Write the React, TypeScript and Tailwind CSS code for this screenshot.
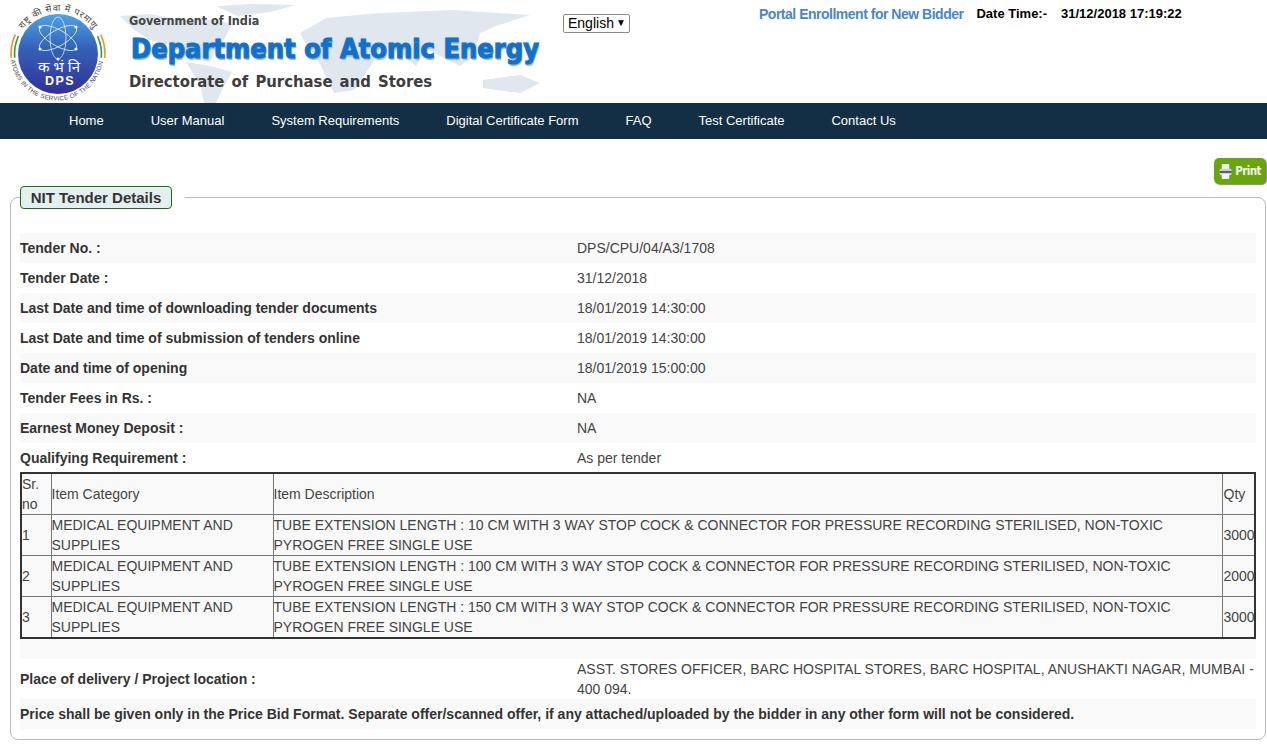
const navItems = [
  "Home",
  "User Manual",
  "System Requirements",
  "Digital Certificate Form",
  "FAQ",
  "Test Certificate",
  "Contact Us",
];

const details = [
  { label: "Tender No. :", value: "DPS/CPU/04/A3/1708" },
  { label: "Tender Date :", value: "31/12/2018" },
  { label: "Last Date and time of downloading tender documents", value: "18/01/2019 14:30:00" },
  { label: "Last Date and time of submission of tenders online", value: "18/01/2019 14:30:00" },
  { label: "Date and time of opening", value: "18/01/2019 15:00:00" },
  { label: "Tender Fees in Rs. :", value: "NA" },
  { label: "Earnest Money Deposit :", value: "NA" },
  { label: "Qualifying Requirement :", value: "As per tender" },
];

const items = [
  { sr: 1, length: "10 CM", qty: 3000 },
  { sr: 2, length: "100 CM", qty: 2000 },
  { sr: 3, length: "150 CM", qty: 3000 },
];

function Logo() {
  return (
    <svg width="110" height="103" viewBox="0 0 110 103" className="-ml-[2px] shrink-0">
      <defs>
        <linearGradient id="globe" x1="0" y1="0" x2="0" y2="1">
          <stop offset="0" stopColor="#4fa3e6" />
          <stop offset="0.42" stopColor="#3463b8" />
          <stop offset="1" stopColor="#322f98" />
        </linearGradient>
        <path id="topArc" d="M22.8 29.3 A43 43 0 0 1 93.2 29.3" />
        <path id="bottomArc" d="M10.9 60 A46.5 46.5 0 0 0 103.1 60" />
      </defs>
      <path d="M15.3 34.6 A46 46 0 0 0 11.2 58" fill="none" stroke="#f0932b" strokeWidth="1.6" />
      <path d="M18.5 36 A42.5 42.5 0 0 0 14.7 57.7" fill="none" stroke="#2f9a3c" strokeWidth="1.6" />
      <path d="M97.5 36 A42.5 42.5 0 0 1 101.3 57.7" fill="none" stroke="#2f9a3c" strokeWidth="1.6" />
      <path d="M100.7 34.6 A46 46 0 0 1 104.8 58" fill="none" stroke="#f0932b" strokeWidth="1.6" />
      <circle cx="58" cy="54" r="40" fill="url(#globe)" />
      <g fill="none" stroke="#fff" strokeWidth="0.8" opacity="0.85">
        <ellipse cx="58" cy="38" rx="8" ry="21" />
        <ellipse cx="58" cy="38" rx="8" ry="21" transform="rotate(60 58 38)" />
        <ellipse cx="58" cy="38" rx="8" ry="21" transform="rotate(-60 58 38)" />
      </g>
      <g fill="#fff">
        <circle cx="58" cy="59" r="1.5" />
        <circle cx="40" cy="49" r="1.5" />
        <circle cx="76" cy="49" r="1.5" />
        <circle cx="40" cy="27" r="1.5" />
        <circle cx="76" cy="27" r="1.5" />
      </g>
      <text x="59" y="72" textAnchor="middle" fontSize="15" fill="#fff" fontFamily="'Noto Sans', sans-serif">
        क भं नि
      </text>
      <text x="60" y="85" textAnchor="middle" fontSize="12.5" fontWeight="700" letterSpacing="1.5" fill="#fff" fontFamily="'Liberation Sans', sans-serif">
        DPS
      </text>
      <text fontSize="9" fill="#444" fontFamily="'Noto Sans', sans-serif">
        <textPath href="#topArc" textLength="82" lengthAdjust="spacing">
          राष्ट्र की सेवा में परमाणु
        </textPath>
      </text>
      <text fontSize="6.2" fill="#444" fontFamily="'Liberation Sans', sans-serif">
        <textPath href="#bottomArc" textLength="132" lengthAdjust="spacing">
          ATOMS IN THE SERVICE OF THE NATION
        </textPath>
      </text>
    </svg>
  );
}

function WorldMap() {
  return (
    <svg
      width="430"
      height="103"
      viewBox="0 0 430 103"
      className="absolute left-[120px] top-0"
      fill="#e0e7ef"
    >
      <path d="M0 16 L30 14 L60 20 L95 20 L112 24 L104 40 L96 48 L90 62 L72 58 L56 46 L30 40 L14 30 Z" />
      <path d="M66 62 L90 66 L112 72 L104 86 L96 103 L84 103 L80 84 Z" />
      <path d="M96 6 L130 4 L176 5 L150 12 L118 16 Z" />
      <path d="M180 33 L206 18 L260 13 L333 10 L410 15 L376 26 L360 33 L354 56 L340 66 L320 56 L306 48 L296 66 L280 52 L262 46 L252 64 L234 90 L214 93 L200 64 L186 44 Z" />
      <path d="M363 80 L400 75 L420 83 L400 93 L363 88 Z" />
    </svg>
  );
}

function DetailRow({ label, value, striped }: { label: string; value: string; striped: boolean }) {
  return (
    <div className={`flex h-[30px] items-center text-sm ${striped ? "bg-[#f9f9f9]" : ""}`}>
      <div className="w-[557px] font-bold text-[#333]">{label}</div>
      <div className="text-[#444]">{value}</div>
    </div>
  );
}

function PrinterIcon() {
  return (
    <svg width="13" height="17" viewBox="0 0 14 17">
      <rect x="3" y="0.5" width="8" height="6" fill="#f1f3f4" />
      <rect x="0.5" y="5.5" width="13" height="7" rx="1.5" fill="#c9ced2" />
      <rect x="0.5" y="8" width="13" height="2" fill="#4f5a60" />
      <rect x="3" y="11" width="8" height="5.5" fill="#f1f3f4" />
    </svg>
  );
}

export default function App() {
  return (
    <div className="min-h-[754px] bg-white font-['Liberation_Sans',Arial,sans-serif]">
      <header className="relative flex h-[103px] overflow-hidden">
        <WorldMap />
        <div className="relative flex w-[563px] pl-[2px]">
          <Logo />
          <div className="pl-[19px] pt-[13px] font-['DejaVu_Sans_Condensed','DejaVu_Sans',sans-serif] font-bold">
            <div className="text-[12.5px] leading-[16px] text-[#444]">Government of India</div>
            <div className="ml-[2px] mt-[2px] whitespace-nowrap text-[27px] leading-[36px] text-[#0f72c8] [-webkit-text-stroke:1px_#1670c6] [text-shadow:0_0_2px_#8dbde8,1px_2px_1px_#9cb4c8]">
              Department of Atomic Energy
            </div>
            <div className="mt-[5px] whitespace-nowrap text-[16.5px] leading-[20px] text-[#3d3d3d] [word-spacing:2px]">
              Directorate of Purchase and Stores
            </div>
          </div>
        </div>
        <div className="relative h-fit pt-[14px]">
          <select className="block h-[19px] w-[67px] appearance-none rounded-[2px] border border-[#8a8a8a] bg-white pl-[4px] text-sm leading-[17px] text-black">
            <option>English</option>
          </select>
          <span className="pointer-events-none absolute left-[53px] top-[15px] text-[10px] leading-[16px] text-black">▼</span>
        </div>
        <div className="relative flex items-start whitespace-nowrap pl-[129px] pt-[6px] text-sm leading-[16px]">
          <span className="font-bold tracking-[-0.49px] text-[#4a86c8]">Portal Enrollment for New Bidder</span>
          <span className="ml-[13px] text-[13px] font-bold text-black">Date Time:-</span>
          <span className="ml-[14px] text-[13px] font-bold text-black">31/12/2018 17:19:22</span>
        </div>
      </header>

      <nav className="flex h-[36px] items-center gap-[47px] bg-[#132f45] pb-px pl-[69px] text-[13px] text-white">
        {navItems.map((item) => (
          <span key={item}>{item}</span>
        ))}
      </nav>

      <div className="flex justify-end pr-px pt-[19px]">
        <button
          type="button"
          className="flex h-[26px] w-[52px] items-center justify-center gap-[3px] rounded-[5px] bg-[#69a50f] pt-px font-['DejaVu_Sans_Condensed','DejaVu_Sans',sans-serif] text-[11.5px] font-bold text-[#f4f8ea] shadow-[1px_1px_1px_#888]"
        >
          <PrinterIcon />
          <span className="tracking-[-0.6px]">Print</span>
        </button>
      </div>

      <fieldset className="ml-[10px] mr-px mt-[2px] h-[554px] rounded-[8px] border border-[#bbb] px-[9px]">
        <legend className="pr-[13px]">
          <span className="block h-[23px] w-[152px] rounded-[4px] border border-[#1e6b1e] bg-[#e4f0f0] text-center text-[15px] font-bold leading-[21px] text-[#333]">
            NIT Tender Details
          </span>
        </legend>

        <div className="pt-[24px]">
          {details.map((row, i) => (
            <DetailRow key={row.label} label={row.label} value={row.value} striped={i % 2 === 0} />
          ))}

          <table className="-mt-px w-full table-fixed border-collapse border-2 border-[#333] text-sm leading-[20px] text-[#444]">
            <colgroup>
              <col className="w-[30px]" />
              <col className="w-[222px]" />
              <col />
              <col className="w-[33px]" />
            </colgroup>
            <tbody className="bg-[#f9f9f9]">
              <tr>
                <td className="border border-[#777]">Sr. no</td>
                <td className="border border-[#777]">Item Category</td>
                <td className="border border-[#777]">Item Description</td>
                <td className="border border-[#777] px-px">Qty</td>
              </tr>
              {items.map((item) => (
                <tr key={item.sr}>
                  <td className="border border-[#777]">{item.sr}</td>
                  <td className="border border-[#777]">MEDICAL EQUIPMENT AND SUPPLIES</td>
                  <td className="border border-[#777]">
                    TUBE EXTENSION LENGTH : {item.length} WITH 3 WAY STOP COCK &amp; CONNECTOR FOR PRESSURE RECORDING
                    STERILISED, NON-TOXIC PYROGEN FREE SINGLE USE
                  </td>
                  <td className="border border-[#777] px-px">{item.qty}</td>
                </tr>
              ))}
            </tbody>
          </table>

          <div className="h-[20px] bg-[#f9f9f9]" />
          <div className="flex h-[40px] items-center text-sm leading-[20px]">
            <div className="w-[557px] shrink-0 font-bold text-[#333]">Place of delivery / Project location :</div>
            <div className="text-[#444]">
              ASST. STORES OFFICER, BARC HOSPITAL STORES, BARC HOSPITAL, ANUSHAKTI NAGAR, MUMBAI - 400 094.
            </div>
          </div>
          <div className="flex h-[30px] items-center bg-[#f9f9f9] text-sm font-bold text-[#333]">
            Price shall be given only in the Price Bid Format. Separate offer/scanned offer, if any attached/uploaded by
            the bidder in any other form will not be considered.
          </div>
        </div>
      </fieldset>
    </div>
  );
}
